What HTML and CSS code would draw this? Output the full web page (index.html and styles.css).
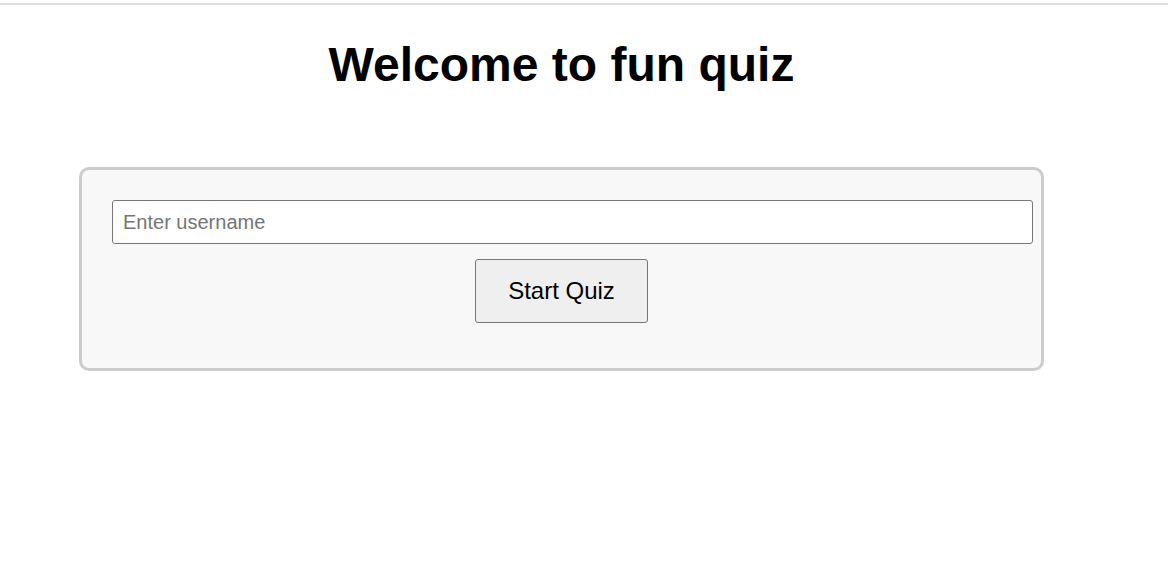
FILE: index.html
```html
<!DOCTYPE html>
<html lang="en">
<head>
<meta charset="utf-8">
<title>Fun Quiz</title>
<link rel="stylesheet" href="styles.css">
</head>
<body>
<div class="topline"></div>
<main class="page">
  <h1 class="title">Welcome to fun quiz</h1>
  <div class="card">
    <input class="username" type="text" placeholder="Enter username">
    <div class="actions">
      <button class="start" type="button">Start Quiz</button>
    </div>
  </div>
</main>
</body>
</html>
```

FILE: styles.css
```css
html, body {
  margin: 0;
  padding: 0;
  background: #ffffff;
}

body {
  font-family: "Liberation Sans", Arial, sans-serif;
  color: #000;
  padding-top: 3px;
}

.topline {
  height: 0;
  border-top: 2px solid #e0e0e0;
}

.page {
  width: 965px;
  margin-left: 79px;
}

.title {
  margin: 32px 0 0 0;
  font-size: 48px;
  font-weight: bold;
  line-height: 55px;
  text-align: center;
}

.card {
  margin-top: 75px;
  background: #f8f8f8;
  border: 3px solid #cccccc;
  border-radius: 10px;
  padding: 30px;
}

.username {
  display: block;
  width: 100%;
  box-sizing: content-box;
  padding: 0 10px;
  height: 42px;
  border: 1px solid #767676;
  border-radius: 3px;
  background: #fff;
  font-family: "Liberation Sans", Arial, sans-serif;
  font-size: 20px;
  color: #000;
  outline: none;
}

.username::placeholder {
  color: #757575;
}

.actions {
  display: flex;
  justify-content: center;
  margin-top: 15px;
  margin-bottom: 15px;
}

.start {
  font-family: "Liberation Sans", Arial, sans-serif;
  font-size: 24px;
  line-height: 28px;
  padding: 17px 32px;
  background: #efefef;
  color: #000;
  border: 1px solid #767676;
  border-radius: 3px;
}
```
